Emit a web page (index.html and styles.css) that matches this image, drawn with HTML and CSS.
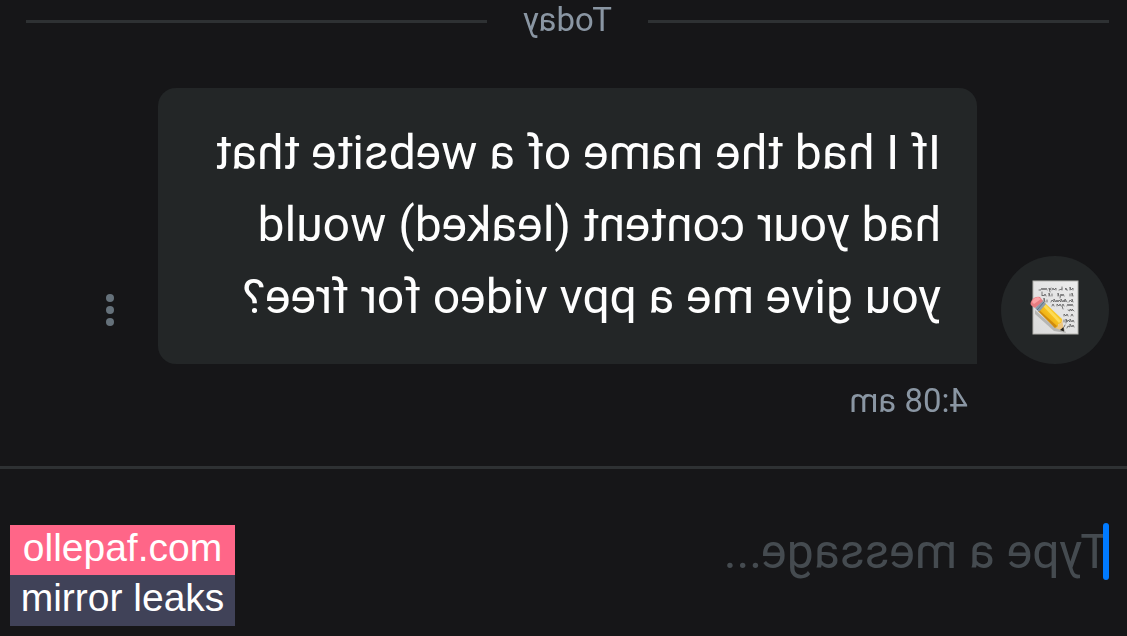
FILE: index.html
```html
<!DOCTYPE html>
<html lang="en">
<head>
<meta charset="utf-8">
<meta name="viewport" content="width=device-width, initial-scale=1">
<title>Messages</title>
<link rel="stylesheet" href="styles.css">
</head>
<body>
<main class="chat">
  <div class="day"><span>Today</span></div>
  <section class="message">
    <svg class="avatar" viewBox="0 0 108 108" role="img" aria-label="Memo">
      <defs>
        <linearGradient id="paper" x1="0" y1="0" x2="1" y2="1">
          <stop offset="0" stop-color="#ececec"/><stop offset="1" stop-color="#dadada"/>
        </linearGradient>
        <linearGradient id="wood" x1="0" y1="0" x2="1" y2="1">
          <stop offset="0" stop-color="#ffe04a"/><stop offset=".5" stop-color="#f6bd1c"/><stop offset="1" stop-color="#d48908"/>
        </linearGradient>
      </defs>
      <circle cx="54" cy="54" r="54" fill="#232627"/>
      <rect x="31" y="25" width="45" height="53" fill="url(#paper)" stroke="#b4b3af" stroke-width="1"/>
      <g fill="none" stroke="#5a5a5c" stroke-width=".8" stroke-linecap="round" stroke-linejoin="round">
        <path d="M36 34v-2l2 2 1-3v3M42 34l2-1-1-1-1 2M47 34v-3m0 2 3 1M53 34v-2l2 2 1-2 1 2m1-2 1 2 1-2-1 4M62 34l1-2 1 2 1-2 1 2 1-2 1 2h2"/>
        <path d="M36 40l1-3v3m2 0v-2M45 40l1-2 1 2 1-2 1 4m1-2 1-3v3M57 40v-2m2 2 1-3v3M63 40l1-2 1 2 1-1 1 1v-4"/>
        <path d="M36 46l1-3v3l2-2 1 2M42 46l2-3v3l1-2 1 2 2-3v3l2-2 1 2 1-2 1 2 2-3v3l2-2 1 2M62 46v-2m2 2 1-4v4"/>
        <path d="M36 50l1-2 1 2 1-2 1 2 1-2 1 2M45 50l1-2 1 2-1 3m2-3 1-2 1 2 2-2v2m3 0 1-2 1 2"/>
        <path d="M35 55l2-2v2l2-2v2l2-1"/>
        <path d="M36 60l1-2 1 2m3 0 1-2 1 2 2-2v2"/>
        <path d="M35 66l1-2 1 2 2-3v3l2-2 1 2 1-3v4m2-3v2"/>
        <path d="M35 71l1-2 1 2 2-3v3l2-1 1 2m2-3 1 2"/>
      </g>
      <path d="M43 77 46 70 56 70 74 54 74 58 55 75z" fill="#555550" opacity=".3"/>
      <path d="M64 47 71 55 54 72Q50 71 51 68Q46 68 47 63z" fill="url(#wood)"/>
      <path d="M64 48 66 50 50 67 48 65z" fill="#ffe56b" opacity=".7"/>
      <path d="M70 54 71 55 54 72 52 70z" fill="#c27b0b" opacity=".7"/>
      <path d="M47 63Q47 68 51 68Q50 71 54 72L45 75z" fill="#edc581"/>
      <path d="M45.500 71 45 75.500 49 74z" fill="#222"/>
      <path d="M63 48 67 44 74 52 70 56z" fill="#8c9cab"/>
      <path d="M65 46 72 54" stroke="#5f7083" stroke-width="1"/>
      <path d="M66 45 69 41Q74 40 77 44T77 50L74 52z" fill="#e77c81"/>
      <path d="M68 43 71 41Q76 42 77 46L75 48z" fill="#faa3a6"/>
    </svg>
    <p class="bubble">If I had the name of a website that had your content (leaked) would you give me a ppv video for free?</p>
    <button class="more" type="button" aria-label="Message options">
      <svg viewBox="0 0 8 32"><circle cx="4" cy="4" r="4"/><circle cx="4" cy="16" r="4"/><circle cx="4" cy="28" r="4"/></svg>
    </button>
  </section>
  <time class="time">4:08 am</time>
  <form class="composer">
    <span class="caret"></span>
    <input class="field" type="text" aria-label="Message" placeholder="Type a message...">
  </form>
</main>
<aside class="stamp">
  <p class="stamp-site">ollepaf.com</p>
  <p class="stamp-note">mirror leaks</p>
</aside>
</body>
</html>
```

FILE: styles.css
```css
* { box-sizing: border-box; }
body {
  margin: 0;
  background: #161618;
  font-family: Roboto, "Liberation Sans", sans-serif;
}
p { margin: 0; }

/* The conversation is shown mirrored left to right. */
.chat {
  min-height: 100vh;
  display: flex;
  flex-direction: column;
  transform: scaleX(-1);
}
.day {
  display: flex;
  align-items: center;
  gap: 36px;
  padding: 0 26px 0 18px;
  font-size: 33px;
  line-height: 40px;
  color: #8a96a3;
}
.day::before, .day::after {
  content: "";
  flex: 1;
  height: 3px;
  margin-top: 3px;
  background: #2e3133;
}
.message {
  display: flex;
  align-items: flex-end;
  padding: 48px 97px 0 18px;
}
.avatar {
  flex: none;
  width: 108px;
  height: 108px;
  margin-right: 24px;
}
.bubble {
  flex: 1;
  margin-right: 35px;
  padding: 29px 36px 31px;
  border-radius: 18px 18px 18px 0;
  background: #232627;
  color: #fefefe;
  font-size: 48px;
  line-height: 72px;
}
.more {
  flex: none;
  width: 26px;
  height: 108px;
  padding: 0;
  border: 0;
  background: none;
}
.more svg {
  display: block;
  width: 8px;
  height: 32px;
  margin: 0 auto;
  fill: #65717a;
}
.time {
  padding: 17px 159px 0;
  font-size: 33px;
  line-height: 40px;
  color: #8a96a3;
}
.composer {
  flex: 1;
  display: flex;
  align-items: flex-start;
  margin-top: 45px;
  padding: 54px 18px 0;
  border-top: 3px solid #2e3133;
}
.caret {
  flex: none;
  width: 6px;
  height: 57px;
  margin-right: -6px;
  border-radius: 3px;
  background: #007aff;
  z-index: 1;
}
.field {
  flex: 1;
  min-width: 0;
  height: 57px;
  padding: 0;
  border: 0;
  outline: 0;
  background: none;
  font: 48px Roboto, "Liberation Sans", sans-serif;
  color: #fefefe;
}
.field::placeholder { color: #454b50; opacity: 1; }

.stamp {
  position: absolute;
  left: 10px;
  bottom: 10px;
  width: 225px;
  color: #fff;
  font: 39px/46px "Liberation Sans", Arial, sans-serif;
  text-align: center;
}
.stamp-site { padding: 0 0 4px; background: #ff6688; }
.stamp-note { padding: 0 0 5px; background: #404258; }
```
